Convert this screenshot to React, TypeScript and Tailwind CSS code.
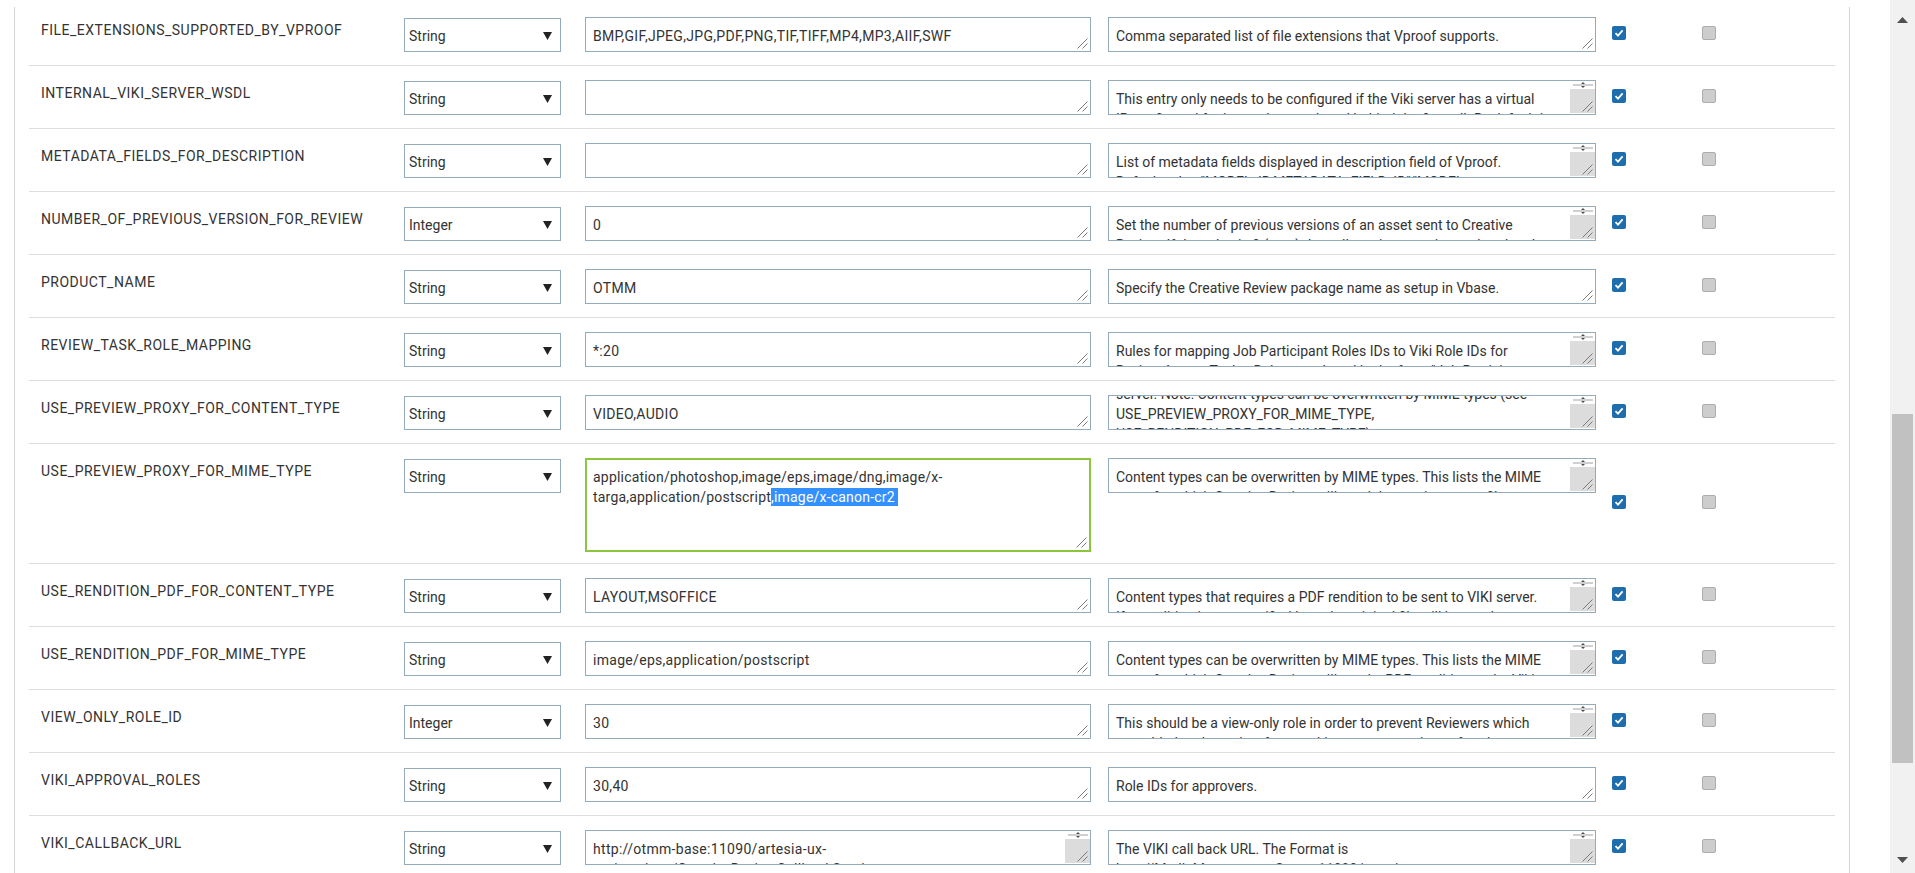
import React from 'react';

type Row = {
  name: string;
  type: string;
  value: string[];
  desc: string[];
  descScroll?: boolean;
  descOffset?: boolean;
  valueScroll?: boolean;
  focused?: boolean;
};

const rows: Row[] = [
  {
    name: 'FILE_EXTENSIONS_SUPPORTED_BY_VPROOF',
    type: 'String',
    value: ['BMP,GIF,JPEG,JPG,PDF,PNG,TIF,TIFF,MP4,MP3,AIIF,SWF'],
    desc: ['Comma separated list of file extensions that Vproof supports.'],
  },
  {
    name: 'INTERNAL_VIKI_SERVER_WSDL',
    type: 'String',
    value: [],
    desc: [
      'This entry only needs to be configured if the Viki server has a virtual',
      'IP configured for internal network and behind the firewall. By default its',
    ],
    descScroll: true,
  },
  {
    name: 'METADATA_FIELDS_FOR_DESCRIPTION',
    type: 'String',
    value: [],
    desc: [
      'List of metadata fields displayed in description field of Vproof.',
      'Default value "MODEL_ID,METADATA_FIELD_ID","MODEL',
    ],
    descScroll: true,
  },
  {
    name: 'NUMBER_OF_PREVIOUS_VERSION_FOR_REVIEW',
    type: 'Integer',
    value: ['0'],
    desc: [
      'Set the number of previous versions of an asset sent to Creative',
      'Review. If the value is 0 (zero) then all previous versions other than last',
    ],
    descScroll: true,
  },
  {
    name: 'PRODUCT_NAME',
    type: 'String',
    value: ['OTMM'],
    desc: ['Specify the Creative Review package name as setup in Vbase.'],
  },
  {
    name: 'REVIEW_TASK_ROLE_MAPPING',
    type: 'String',
    value: ['*:20'],
    desc: [
      'Rules for mapping Job Participant Roles IDs to Viki Role IDs for',
      'Review Assets Tasks. Roles are placed in the form "Job Participant',
    ],
    descScroll: true,
  },
  {
    name: 'USE_PREVIEW_PROXY_FOR_CONTENT_TYPE',
    type: 'String',
    value: ['VIDEO,AUDIO'],
    desc: [
      'server. Note: Content types can be overwritten by MIME types (see',
      'USE_PREVIEW_PROXY_FOR_MIME_TYPE,',
      'USE_RENDITION_PDF_FOR_MIME_TYPE)',
    ],
    descScroll: true,
    descOffset: true,
  },
  {
    name: 'USE_PREVIEW_PROXY_FOR_MIME_TYPE',
    type: 'String',
    value: [],
    desc: [
      'Content types can be overwritten by MIME types. This lists the MIME',
      'types for which Creative Review will send the preview proxy file to',
    ],
    descScroll: true,
    focused: true,
  },
  {
    name: 'USE_RENDITION_PDF_FOR_CONTENT_TYPE',
    type: 'String',
    value: ['LAYOUT,MSOFFICE'],
    desc: [
      'Content types that requires a PDF rendition to be sent to VIKI server.',
      'If a rendition is not specified here the original file will be used to',
    ],
    descScroll: true,
  },
  {
    name: 'USE_RENDITION_PDF_FOR_MIME_TYPE',
    type: 'String',
    value: ['image/eps,application/postscript'],
    desc: [
      'Content types can be overwritten by MIME types. This lists the MIME',
      'types for which Creative Review will send a PDF rendition to the Viki',
    ],
    descScroll: true,
  },
  {
    name: 'VIEW_ONLY_ROLE_ID',
    type: 'Integer',
    value: ['30'],
    desc: [
      'This should be a view-only role in order to prevent Reviewers which',
      'are added to the review from making any annotations after the',
    ],
    descScroll: true,
  },
  {
    name: 'VIKI_APPROVAL_ROLES',
    type: 'String',
    value: ['30,40'],
    desc: ['Role IDs for approvers.'],
  },
  {
    name: 'VIKI_CALLBACK_URL',
    type: 'String',
    value: ['http://otmm-base:11090/artesia-ux-', 'ws/services/CreativeReviewCallbackService'],
    valueScroll: true,
    desc: ['The VIKI call back URL. The Format is', 'http://MediaManagementServer:11090/artesia-ux-'],
    descScroll: true,
  },
];

const Grip = () => (
  <svg width="11" height="11" viewBox="0 0 11 11" className="absolute right-[2px] bottom-[2px]">
    <line x1="10.5" y1="0.5" x2="0.5" y2="10.5" stroke="#7a7a7a" strokeWidth="1" />
    <line x1="10.5" y1="5.5" x2="5.5" y2="10.5" stroke="#7a7a7a" strokeWidth="1" />
  </svg>
);

// squeezed native scrollbar of a short textarea
const MiniScroll = () => (
  <div className="w-[25px] shrink-0 flex flex-col">
    <svg width="25" height="8" viewBox="0 0 25 8" className="shrink-0">
      <line x1="3" y1="4" x2="23" y2="4" stroke="#a0a0a0" strokeWidth="1" />
      <polygon points="13,1 15,3 11,3" fill="#505050" />
      <polygon points="13,7 15,5 11,5" fill="#505050" />
    </svg>
    <div className="flex-1 bg-[#dcdcdc] mb-[1px]" />
  </div>
);

const TextBox = ({
  lines,
  scroll,
  offset,
  wide,
}: {
  lines: string[];
  scroll?: boolean;
  offset?: boolean;
  wide?: boolean;
}) => (
  <div className="relative flex h-[35px] border border-[#93abbd] bg-white overflow-hidden">
    <div
      className={`flex-1 min-w-0 overflow-hidden pl-[7px] pt-[8px] ${offset ? '-mt-[20px]' : ''} ${
        wide ? 'tracking-[0.3px]' : ''
      }`}
    >
      {lines.map((l, i) => (
        <div key={i} className="whitespace-nowrap leading-5">
          {l}
        </div>
      ))}
    </div>
    {scroll && <MiniScroll />}
    <Grip />
  </div>
);

const FocusedBox = () => (
  <div className="relative h-[94px] border-2 border-[#8cc63f] bg-white overflow-hidden pl-[6px] pt-[7px] leading-5 tracking-[0.2px]">
    <div className="whitespace-nowrap">application/photoshop,image/eps,image/dng,image/x-</div>
    <div className="whitespace-nowrap">
      targa,application/postscript
      <span className="bg-[#3390ff] text-white py-[1px]">,image/x-canon-cr2&nbsp;</span>
    </div>
    <Grip />
  </div>
);

const Check = ({ on }: { on: boolean }) =>
  on ? (
    <div className="w-[14px] h-[14px] rounded-[2px] bg-[#1e6eae] flex items-center justify-center">
      <svg width="10" height="10" viewBox="0 0 10 10">
        <path d="M1.5 5.2 L4 7.6 L8.6 2.4" fill="none" stroke="#fff" strokeWidth="1.8" />
      </svg>
    </div>
  ) : (
    <div className="w-[14px] h-[14px] rounded-[2px] bg-[#cdcdcd] border border-[#adadad]" />
  );

const ConfigRow = ({ row }: { row: Row }) => (
  <div className="flex border-b border-[#dedede]">
    <div className="w-[375px] shrink-0 pl-[12px] pt-[17px] leading-5 tracking-[0.5px]">{row.name}</div>
    <div className="w-[157px] shrink-0 mr-[24px] pt-[15px]">
      <div className="h-[34px] border border-[#93abbd] bg-white flex items-center justify-between pl-[4px] pr-[8px] pt-[2px]">
        <span>{row.type}</span>
        <svg width="9" height="8" viewBox="0 0 9 8">
          <polygon points="0,0 9,0 4.5,8" fill="#222" />
        </svg>
      </div>
    </div>
    <div className={`w-[506px] shrink-0 mr-[17px] pt-[14px] ${row.focused ? 'pb-[11px]' : 'pb-[13px]'}`}>
      {row.focused ? <FocusedBox /> : <TextBox lines={row.value} scroll={row.valueScroll} wide />}
    </div>
    <div className="w-[488px] shrink-0 mr-[16px] pt-[14px]">
      <TextBox lines={row.desc} scroll={row.descScroll} offset={row.descOffset} />
    </div>
    <div className="w-[14px] shrink-0 mr-[76px] flex items-center pb-[3px]">
      <Check on />
    </div>
    <div className="w-[14px] shrink-0 flex items-center pb-[3px]">
      <Check on={false} />
    </div>
  </div>
);

export default function App() {
  return (
    <div className="flex h-[873px] overflow-hidden bg-white text-[14px] text-[#333] font-[family-name:Roboto,sans-serif]">
      <div className="flex-1 min-w-0">
        <div className="ml-[14px] mt-[7px] w-[1836px] h-[866px] border-l border-r border-[#d6d6d6] px-[14px] overflow-hidden">
          <div className="-mt-[4px]">
            {rows.map(r => (
              <ConfigRow key={r.name} row={r} />
            ))}
          </div>
        </div>
      </div>
      {/* page scrollbar */}
      <div className="w-[25px] shrink-0 bg-[#f1f1f1] flex flex-col">
        <svg width="25" height="6" viewBox="0 0 25 6" className="mt-[17px] shrink-0">
          <polygon points="7,6 18,6 12.5,0" fill="#505050" />
        </svg>
        <div className="mt-[391px] ml-[2px] w-[21px] h-[349px] bg-[#c1c1c1] shrink-0" />
        <svg width="25" height="6" viewBox="0 0 25 6" className="mt-[94px] shrink-0">
          <polygon points="7,0 18,0 12.5,6" fill="#505050" />
        </svg>
      </div>
    </div>
  );
}
